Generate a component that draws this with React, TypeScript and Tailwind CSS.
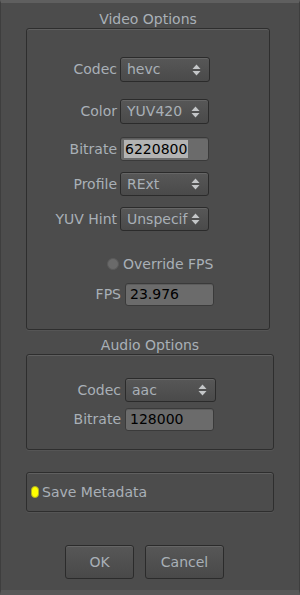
import React from "react";

const font = { fontFamily: '"DejaVu Sans", "Liberation Sans", sans-serif' };

function Arrows() {
  return (
    <svg width="9" height="12" viewBox="0 0 9 12" className="shrink-0">
      <path d="M4.5 0.5 L8.5 5 L0.5 5 Z" fill="#c4c6c8" />
      <path d="M0.5 7 L8.5 7 L4.5 11.5 Z" fill="#c4c6c8" />
    </svg>
  );
}

function Choice({ value, w, h = 25 }: { value: string; w: number; h?: number }) {
  return (
    <div
      className="flex items-center justify-between pl-[6px] pr-[8px] rounded-[3px] border border-[#2b2b2b] bg-gradient-to-b from-[#575757] to-[#4a4a4a] shadow-[inset_0_1px_0_#666] text-[#a9b0b7] text-[14px] overflow-hidden"
      style={{ width: w, height: h }}
    >
      <span className="whitespace-nowrap">{value}</span>
      <Arrows />
    </div>
  );
}

function Input({
  value,
  w,
  h = 24,
  selected = false,
}: {
  value: string;
  w: number;
  h?: number;
  selected?: boolean;
}) {
  return (
    <div
      className="flex items-center pl-[3px] rounded-[3px] border border-[#3a3a3a] bg-[#6b6b6b] shadow-[inset_0_1px_0_#5c5c5c] text-black text-[14px]"
      style={{ width: w, height: h }}
    >
      <span className={selected ? "bg-[#b3b3b3] px-[1px] leading-[18px]" : "px-[1px]"}>{value}</span>
    </div>
  );
}

function Row({
  label,
  labelW,
  gap,
  children,
  mt,
}: {
  label: string;
  labelW: number;
  gap: number;
  mt: number;
  children: React.ReactNode;
}) {
  return (
    <div className="flex items-center" style={{ marginTop: mt }}>
      <div className="text-right text-[#a9b0b7] text-[14px] whitespace-nowrap" style={{ width: labelW, marginRight: gap }}>
        {label}
      </div>
      {children}
    </div>
  );
}

const box =
  "rounded-[3px] border border-[#2e2e2e] shadow-[inset_0_1px_0_#606060,0_1px_0_#555]";

export default function App() {
  return (
    <div
      className="w-[300px] h-[595px] bg-[#4c4c4c] border-t-[3px] border-t-[#5f5f5f] border-l border-l-[#3e3e3e] border-r border-r-[#3e3e3e] border-b-[5px] border-b-[#585858] overflow-hidden"
      style={font}
    >
      <div className="pl-[25px] pt-[7px]">
        <div className="w-[244px] text-center text-[14px] leading-[18px] text-[#a9b0b7]">Video Options</div>

        <div className={`w-[244px] h-[302px] ${box}`}>
          <Row label="Codec" labelW={90} gap={3} mt={28}>
            <Choice value="hevc" w={90} />
          </Row>
          <Row label="Color" labelW={90} gap={3} mt={17}>
            <Choice value="YUV420" w={89} />
          </Row>
          <Row label="Bitrate" labelW={90} gap={3} mt={13}>
            <Input value="6220800" w={89} selected />
          </Row>
          <Row label="Profile" labelW={90} gap={3} mt={11}>
            <Choice value="RExt" w={89} h={24} />
          </Row>
          <Row label="YUV Hint" labelW={90} gap={3} mt={11}>
            <Choice value="Unspecif" w={89} h={24} />
          </Row>
          <div className="flex items-center mt-[26px] pl-[80px]">
            <div className="w-[12px] h-[12px] rounded-full bg-[#6a6a6a] border border-[#5a5a5a] mr-[4px]" />
            <span className="text-[#a9b0b7] text-[14px] leading-[14px]">Override FPS</span>
          </div>
          <Row label="FPS" labelW={94} gap={4} mt={12}>
            <Input value="23.976" w={89} h={23} />
          </Row>
        </div>

        <div className="w-[248px] text-center text-[14px] leading-[18px] pt-[6px] text-[#a9b0b7]">Audio Options</div>

        <div className={`w-[248px] h-[96px] ${box}`}>
          <Row label="Codec" labelW={94} gap={4} mt={23}>
            <Choice value="aac" w={91} h={24} />
          </Row>
          <Row label="Bitrate" labelW={94} gap={4} mt={6}>
            <Input value="128000" w={89} h={23} />
          </Row>
        </div>

        <div className={`w-[248px] h-[40px] mt-[22px] flex items-center pl-[4px] ${box}`}>
          <div className="w-[8px] h-[12px] rounded-full bg-[#ffff00] border border-[#b0b020] mr-[3px]" />
          <span className="text-[#a9b0b7] text-[14px]">Save Metadata</span>
        </div>

        <div className="flex gap-[11px] mt-[33px] pl-[39px]">
          <div className="w-[69px] h-[34px] flex items-center justify-center rounded-[3px] border border-[#2b2b2b] bg-gradient-to-b from-[#575757] to-[#494949] shadow-[inset_0_1px_0_#666] text-[#a9b0b7] text-[14px]">
            OK
          </div>
          <div className="w-[79px] h-[34px] flex items-center justify-center rounded-[3px] border border-[#2b2b2b] bg-gradient-to-b from-[#575757] to-[#494949] shadow-[inset_0_1px_0_#666] text-[#a9b0b7] text-[14px]">
            Cancel
          </div>
        </div>
      </div>
    </div>
  );
}
